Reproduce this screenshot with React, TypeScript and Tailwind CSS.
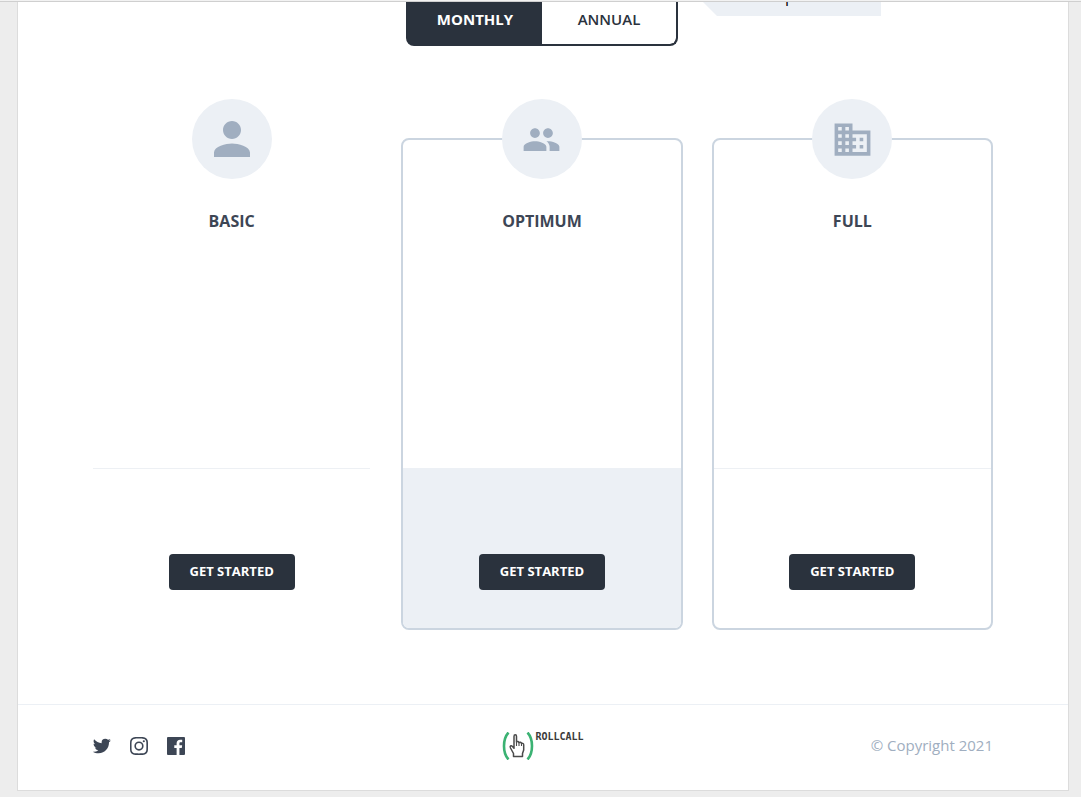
import { useState } from "react";
import type { IconType } from "react-icons";
import { MdPerson, MdPeople, MdBusiness } from "react-icons/md";
import { BiLogoTwitter, BiLogoInstagram, BiLogoFacebookSquare } from "react-icons/bi";

type Plan = { name: string; Icon: IconType; size: number; card: string; footer: string };

const plans: Plan[] = [
  {
    name: "BASIC",
    Icon: MdPerson,
    size: 54,
    card: "border-transparent",
    footer: "border-[#edf0f4]",
  },
  {
    name: "OPTIMUM",
    Icon: MdPeople,
    size: 39,
    card: "border-[#cbd5e0]",
    footer: "border-[#ecf0f5] bg-[#ecf0f5]",
  },
  {
    name: "FULL",
    Icon: MdBusiness,
    size: 43,
    card: "border-[#cbd5e0]",
    footer: "border-[#edf0f4]",
  },
];

const socials: { label: string; Icon: IconType; size: number }[] = [
  { label: "Twitter", Icon: BiLogoTwitter, size: 22 },
  { label: "Instagram", Icon: BiLogoInstagram, size: 24 },
  { label: "Facebook", Icon: BiLogoFacebookSquare, size: 24 },
];

function BillingToggle() {
  const [period, setPeriod] = useState("MONTHLY");
  return (
    <div className="flex h-11 w-[272px] overflow-hidden rounded-b-lg border-2 border-t-0 border-[#2a323d] bg-[#2a323d]">
      {["MONTHLY", "ANNUAL"].map((p) => (
        <button
          key={p}
          type="button"
          aria-pressed={p === period}
          onClick={() => setPeriod(p)}
          className={
            p === period
              ? "flex-1 bg-[#2a323d] pb-2 text-[15px] leading-5 font-bold text-white"
              : "flex-1 rounded-br-md bg-white pb-2 text-[15px] leading-5 font-semibold text-[#2a323d]"
          }
        >
          {p}
        </button>
      ))}
    </div>
  );
}

function PlanCard({ name, Icon, size, card, footer }: Plan) {
  return (
    <section className={`flex h-[492px] flex-col rounded-lg border-2 ${card}`}>
      <div className="flex flex-1 flex-col items-center">
        <div className="-mt-[41px] flex size-20 items-center justify-center rounded-full bg-[#ecf0f5] text-[#a0aec0]">
          <Icon size={size} />
        </div>
        <h2 className="mt-[30px] text-base leading-6 font-bold text-[#3d4655]">{name}</h2>
      </div>
      <div className={`flex h-[160px] flex-col items-center justify-end rounded-b-md border-t pb-[38px] ${footer}`}>
        <button
          type="button"
          className="h-9 w-[126px] rounded bg-[#2a323d] text-[13px] font-bold text-white"
        >
          GET STARTED
        </button>
      </div>
    </section>
  );
}

function Logo() {
  return (
    <a href="#" aria-label="Rollcall" className="flex items-start gap-px text-[#3b3b3b]">
      <svg width="32" height="28" viewBox="0 0 32 28" fill="none">
        <path d="M6.5 .5C.5 7 .5 21 6.5 27.5M25.500 .5C31.5 7 31.5 21 25.500 27.5" stroke="#3bb273" strokeWidth="2.6" />
        <path
          d="M11.5 24.5v-3l-3-5.5c-1-2 .5-3 2-1.500l1.500 1.800V4.500c0-2.200 2.500-2.200 2.500 0V10c1-.8 2-.5 2.500.6c1-.7 2-.3 2.500.8c1.300-.5 2.200.2 2.200 1.600v5l-1.200 3.500v3z"
          stroke="#4a4a4a"
          strokeWidth="1.5"
          strokeLinejoin="round"
        />
        <path d="M14.500 10v4M17 10.600V14M19.500 11.500V14" stroke="#4a4a4a" strokeWidth="1.100" />
      </svg>
      <span className="font-['DejaVu_Sans_Mono',monospace] text-[10px] leading-2.5 font-bold">ROLLCALL</span>
    </a>
  );
}

export default function App() {
  return (
    <div className="min-h-screen border-t border-[#f2f2f2] bg-[#ededed] font-['Open_Sans',sans-serif]">
      <div className="border-t border-[#cfcfcf] pr-3 pb-1.5 pl-[17px]">
        <div className="border border-t-0 border-[#dcdcdc] bg-white">
          <main className="pr-[75px] pb-[74px] pl-[73px]">
            <div className="grid grid-cols-[1fr_auto_1fr] items-start">
              <span />
              <BillingToggle />
              <div className="ml-[25px] flex h-3.5 w-[178px] justify-center overflow-hidden bg-[#ecf0f5] pr-1 text-base leading-4 text-black [clip-path:polygon(0_0,100%_0,100%_100%,14px_100%)]">
                <span className="-mt-[14px]">p</span>
              </div>
            </div>
            <div className="mt-[92px] grid grid-cols-3 gap-[29px]">
              {plans.map((plan) => (
                <PlanCard key={plan.name} {...plan} />
              ))}
            </div>
          </main>
          <footer className="grid h-[86px] grid-cols-3 items-center border-t border-[#ecf0f5] px-[75px] pb-1">
            <nav className="-ml-[3px] flex gap-[13px] text-[#3d4655]">
              {socials.map(({ label, Icon, size }) => (
                <a key={label} href="#" aria-label={label} className="flex size-6 items-center justify-center">
                  <Icon size={size} />
                </a>
              ))}
            </nav>
            <div className="flex justify-center">
              <Logo />
            </div>
            <p className="text-right text-[15px] text-[#a0aec0]">© Copyright 2021</p>
          </footer>
        </div>
      </div>
    </div>
  );
}
